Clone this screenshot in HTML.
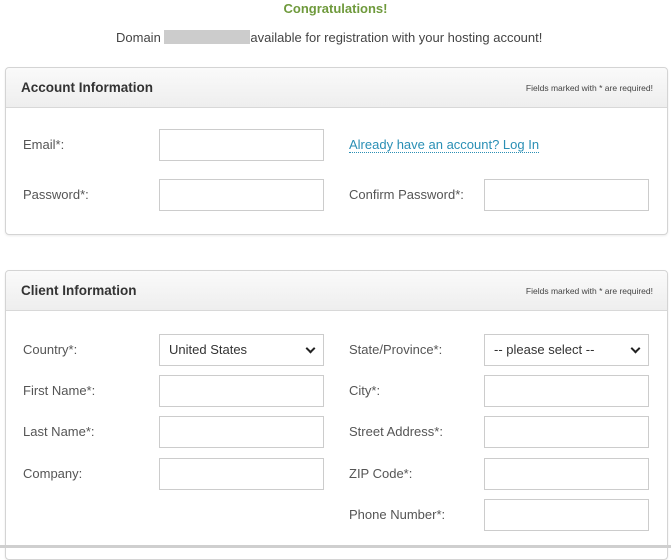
<!DOCTYPE html>
<html><head><style>
*{box-sizing:border-box;margin:0;padding:0}
body{width:671px;height:548px;background:#fff;font-family:"Liberation Sans",sans-serif;color:#555;position:relative;overflow:hidden;font-size:13px}
.a{position:absolute;white-space:nowrap}
.panel{position:absolute;left:5px;width:663px;border:1px solid #d4d4d4;border-radius:4px;background:#fff;box-shadow:0 1px 2px rgba(0,0,0,.08)}
.hd{height:40px;background:linear-gradient(#fafafa,#eeeeee);border-bottom:1px solid #d8d8d8;border-radius:4px 4px 0 0;position:relative}
.hd b{position:absolute;left:15px;top:12px;font-size:13.5px;color:#333}
.hd span{position:absolute;right:14px;top:15px;font-size:8.5px;color:#444}
.in{position:absolute;width:165px;height:32px;border:1px solid #ccc;background:#fff}
.sel{padding-left:9px;line-height:30px;color:#333;font-size:13px}
.sel:after{content:"";position:absolute;right:9px;top:10px;width:5px;height:5px;border-right:2px solid #222;border-bottom:2px solid #222;transform:rotate(45deg)}
.l{position:absolute;font-size:13px;color:#555}
</style></head><body>
<div class="a" style="left:0;width:671px;text-align:center;top:1px;font-weight:bold;color:#6f9a3c;font-size:13px">Congratulations!</div>
<div class="a" style="left:116px;top:30px;font-size:13px;color:#444">Domain <span style="display:inline-block;width:86px;height:14px;background:#ccc;vertical-align:-2px"></span>available for registration with your hosting account!</div>

<div class="panel" style="top:67px;height:168px"><div class="hd"><b>Account Information</b><span>Fields marked with * are required!</span></div></div>
<div class="l" style="left:23px;top:137px">Email*:</div>
<div class="in" style="left:159px;top:129px"></div>
<div class="l" style="left:349px;top:137px;color:#2a8fb5;border-bottom:1px dotted #2a8fb5;line-height:15px">Already have an account? Log In</div>
<div class="l" style="left:23px;top:187px">Password*:</div>
<div class="in" style="left:159px;top:179px"></div>
<div class="l" style="left:349px;top:187px">Confirm Password*:</div>
<div class="in" style="left:484px;top:179px"></div>

<div class="panel" style="top:270px;height:290px"><div class="hd"><b>Client Information</b><span>Fields marked with * are required!</span></div></div>
<div class="l" style="left:23px;top:342px">Country*:</div>
<div class="in sel" style="left:159px;top:334px">United States</div>
<div class="l" style="left:349px;top:342px">State/Province*:</div>
<div class="in sel" style="left:484px;top:334px">-- please select --</div>
<div class="l" style="left:23px;top:383px">First Name*:</div>
<div class="in" style="left:159px;top:375px"></div>
<div class="l" style="left:349px;top:383px">City*:</div>
<div class="in" style="left:484px;top:375px"></div>
<div class="l" style="left:23px;top:424px">Last Name*:</div>
<div class="in" style="left:159px;top:416px"></div>
<div class="l" style="left:349px;top:424px">Street Address*:</div>
<div class="in" style="left:484px;top:416px"></div>
<div class="l" style="left:23px;top:466px">Company:</div>
<div class="in" style="left:159px;top:458px"></div>
<div class="l" style="left:349px;top:466px">ZIP Code*:</div>
<div class="in" style="left:484px;top:458px"></div>
<div class="l" style="left:349px;top:507px">Phone Number*:</div>
<div class="in" style="left:484px;top:499px"></div>
<div class="a" style="left:0;top:545px;width:671px;height:3px;background:#cfcfcf"></div>
</body></html>
